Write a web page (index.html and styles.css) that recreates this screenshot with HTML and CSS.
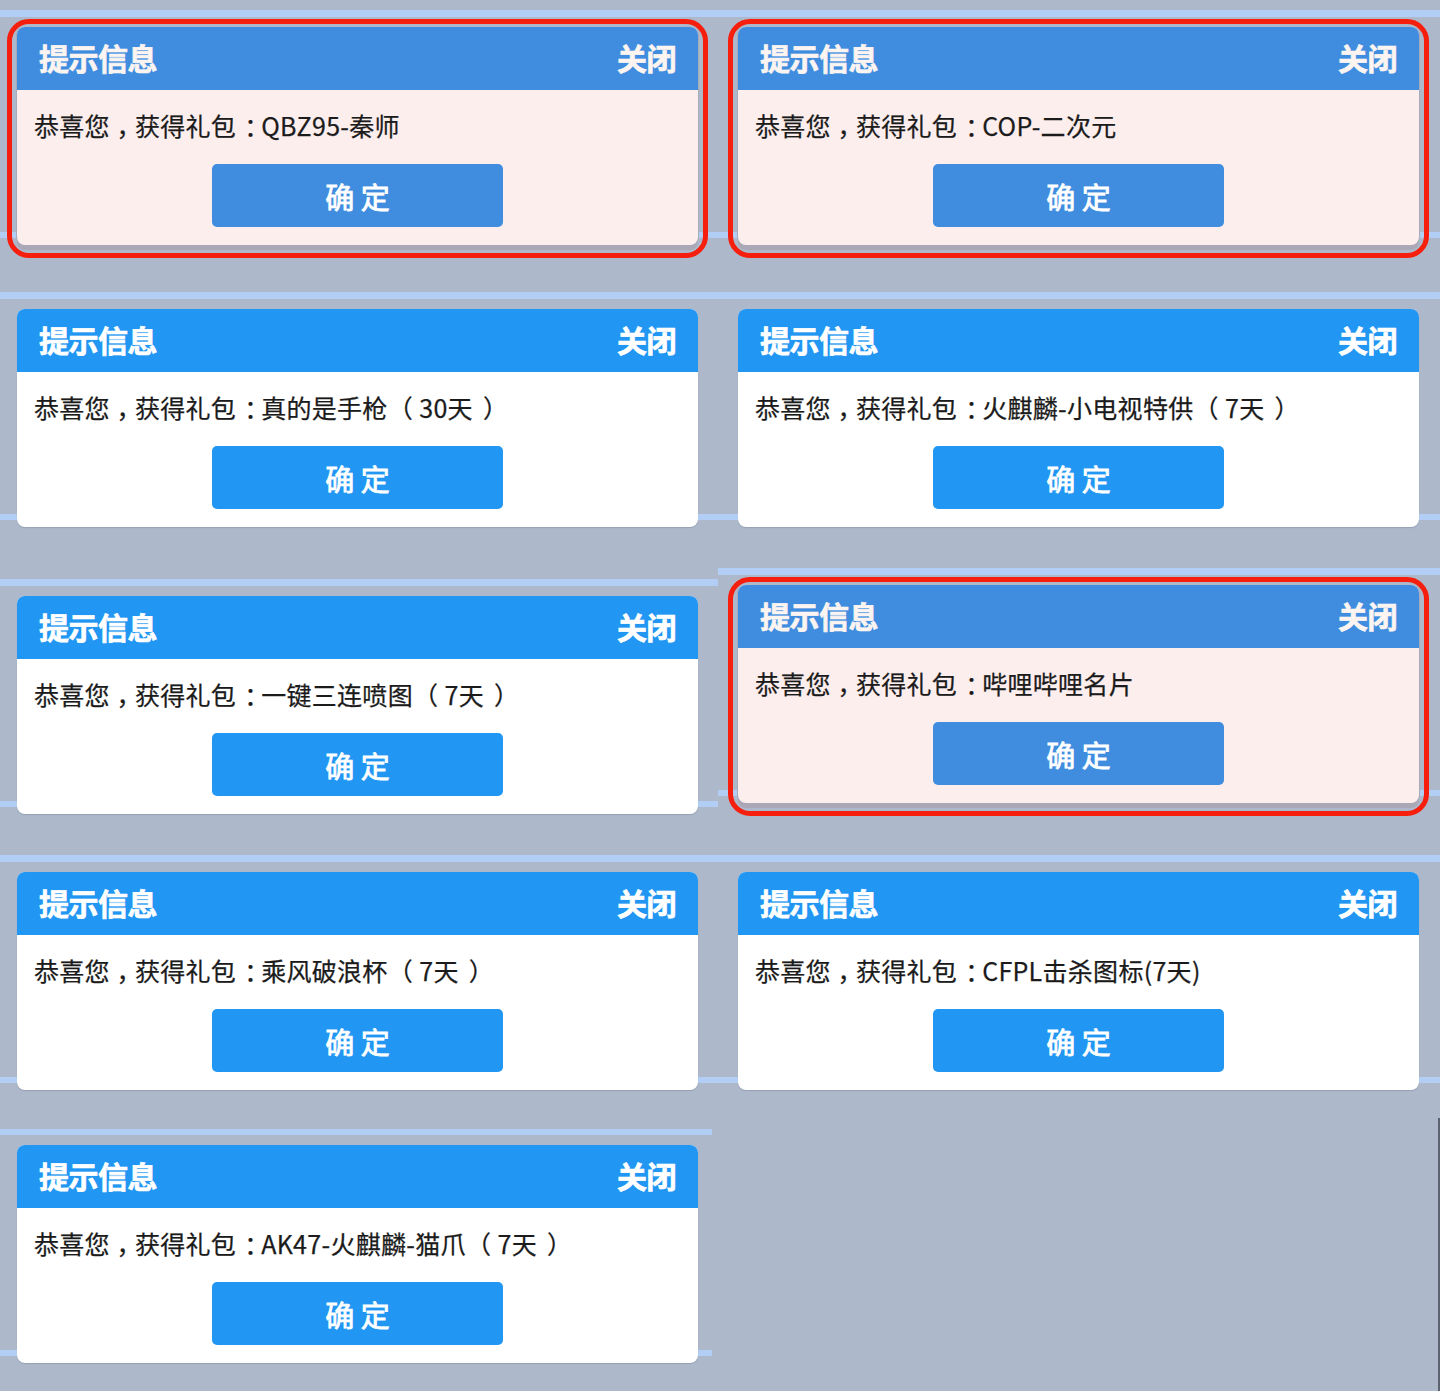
FILE: index.html
```html
<!DOCTYPE html>
<html lang="zh-CN">
<head>
<meta charset="utf-8">
<title>提示信息</title>
<link rel="stylesheet" href="styles.css">
</head>
<body>
<div class="board">
  <div class="col col-left">
    <div class="tile h282">
      <div class="dialog hl">
        <div class="dlg-head"><span class="dlg-title">提示信息</span><span class="dlg-close">关闭</span></div>
        <div class="dlg-body">
          <p class="dlg-msg">恭喜您<span class="pn pn-comma">，</span>获得礼包<span class="pn pn-colon">：</span>QBZ95-秦师</p>
          <button class="dlg-btn">确 定</button>
        </div>
      </div>
    </div>
    <div class="tile h287">
      <div class="dialog">
        <div class="dlg-head"><span class="dlg-title">提示信息</span><span class="dlg-close">关闭</span></div>
        <div class="dlg-body">
          <p class="dlg-msg">恭喜您<span class="pn pn-comma">，</span>获得礼包<span class="pn pn-colon">：</span>真的是手枪<span class="pn pn-open">（</span>30天<span class="pn pn-close">）</span></p>
          <button class="dlg-btn">确 定</button>
        </div>
      </div>
    </div>
    <div class="tile h276">
      <div class="dialog">
        <div class="dlg-head"><span class="dlg-title">提示信息</span><span class="dlg-close">关闭</span></div>
        <div class="dlg-body">
          <p class="dlg-msg">恭喜您<span class="pn pn-comma">，</span>获得礼包<span class="pn pn-colon">：</span>一键三连喷图<span class="pn pn-open">（</span>7天<span class="pn pn-close">）</span></p>
          <button class="dlg-btn">确 定</button>
        </div>
      </div>
    </div>
    <div class="tile h273">
      <div class="dialog">
        <div class="dlg-head"><span class="dlg-title">提示信息</span><span class="dlg-close">关闭</span></div>
        <div class="dlg-body">
          <p class="dlg-msg">恭喜您<span class="pn pn-comma">，</span>获得礼包<span class="pn pn-colon">：</span>乘风破浪杯<span class="pn pn-open">（</span>7天<span class="pn pn-close">）</span></p>
          <button class="dlg-btn">确 定</button>
        </div>
      </div>
    </div>
    <div class="tile h273 short-stripe">
      <div class="dialog">
        <div class="dlg-head"><span class="dlg-title">提示信息</span><span class="dlg-close">关闭</span></div>
        <div class="dlg-body">
          <p class="dlg-msg">恭喜您<span class="pn pn-comma">，</span>获得礼包<span class="pn pn-colon">：</span>AK47-火麒麟-猫爪<span class="pn pn-open">（</span>7天<span class="pn pn-close">）</span></p>
          <button class="dlg-btn">确 定</button>
        </div>
      </div>
    </div>
  </div>
  <div class="col col-right">
    <div class="tile h282">
      <div class="dialog hl">
        <div class="dlg-head"><span class="dlg-title">提示信息</span><span class="dlg-close">关闭</span></div>
        <div class="dlg-body">
          <p class="dlg-msg">恭喜您<span class="pn pn-comma">，</span>获得礼包<span class="pn pn-colon">：</span>COP-二次元</p>
          <button class="dlg-btn">确 定</button>
        </div>
      </div>
    </div>
    <div class="tile h276">
      <div class="dialog">
        <div class="dlg-head"><span class="dlg-title">提示信息</span><span class="dlg-close">关闭</span></div>
        <div class="dlg-body">
          <p class="dlg-msg">恭喜您<span class="pn pn-comma">，</span>获得礼包<span class="pn pn-colon">：</span>火麒麟-小电视特供<span class="pn pn-open">（</span>7天<span class="pn pn-close">）</span></p>
          <button class="dlg-btn">确 定</button>
        </div>
      </div>
    </div>
    <div class="tile h287">
      <div class="dialog hl">
        <div class="dlg-head"><span class="dlg-title">提示信息</span><span class="dlg-close">关闭</span></div>
        <div class="dlg-body">
          <p class="dlg-msg">恭喜您<span class="pn pn-comma">，</span>获得礼包<span class="pn pn-colon">：</span>哔哩哔哩名片</p>
          <button class="dlg-btn">确 定</button>
        </div>
      </div>
    </div>
    <div class="tile h273">
      <div class="dialog">
        <div class="dlg-head"><span class="dlg-title">提示信息</span><span class="dlg-close">关闭</span></div>
        <div class="dlg-body">
          <p class="dlg-msg">恭喜您<span class="pn pn-comma">，</span>获得礼包<span class="pn pn-colon">：</span>CFPL击杀图标(7天)</p>
          <button class="dlg-btn">确 定</button>
        </div>
      </div>
    </div>
    <div class="tile h273 empty"></div>
  </div>
</div>
</body>
</html>
```

FILE: styles.css
```css
html, body {
  margin: 0;
  padding: 0;
  background: #adb9cb;
}

body {
  font-family: "Noto Sans CJK SC", "Noto Sans", sans-serif;
  color: #1b1b1b;
}

.board {
  display: flex;
  width: 1440px;
  height: 1391px;
  overflow: hidden;
}

.col {
  display: flex;
  flex-direction: column;
}

.col-left { width: 718px; }
.col-right { width: 722px; }

.tile {
  box-sizing: border-box;
  padding-top: 27px;
  background:
    linear-gradient(#b2cef4, #b2cef4) 0 10px / 100% 7px no-repeat,
    linear-gradient(#b2cef4, #b2cef4) 0 232px / 100% 6px no-repeat,
    #adb9cb;
}

.col-left .tile { padding-left: 17px; }
.col-right .tile { padding-left: 20px; }

.tile.short-stripe {
  background:
    linear-gradient(#b2cef4, #b2cef4) 0 11px / 712px 6px no-repeat,
    linear-gradient(#b2cef4, #b2cef4) 0 232px / 712px 6px no-repeat,
    #adb9cb;
}

.tile.empty {
  background: #adb9cb;
  box-shadow: inset -2px 0 0 #5c6370;
}

.h282 { height: 282px; }
.h287 { height: 287px; }
.h276 { height: 276px; }
.h273 { height: 273px; }

.dialog {
  position: relative;
  width: 681px;
  height: 218px;
  border-radius: 8px;
  background: #ffffff;
  display: flex;
  flex-direction: column;
  box-shadow: 0 1px 1px rgba(80, 90, 110, 0.25);
}

.dlg-head {
  height: 63px;
  flex: none;
  box-sizing: border-box;
  padding: 0 22px 4px;
  display: flex;
  align-items: center;
  justify-content: space-between;
  background: #2196f3;
  border-radius: 8px 8px 0 0;
  color: #ffffff;
  font-size: 30px;
  font-weight: 700;
  line-height: 1;
  -webkit-text-stroke: 0.7px currentColor;
}

.dlg-title, .dlg-close {
  letter-spacing: -0.5px;
}

.dlg-body {
  flex: 1;
  display: flex;
  flex-direction: column;
  align-items: center;
  padding: 21px 17px 0;
}

.dlg-msg {
  align-self: stretch;
  margin: 0;
  height: 28px;
  font-size: 25px;
  line-height: 28px;
  white-space: nowrap;
  letter-spacing: 0.3px;
  -webkit-text-stroke: 0.25px #1b1b1b;
}

.pn {
  display: inline-block;
}

/* centre the full-width punctuation in its cell, as the reference font does */
.pn-comma { padding-left: 0.26em; letter-spacing: -0.26em; }
.pn-colon { padding-left: 0.32em; letter-spacing: -0.32em; }
.pn-open { margin-right: 0.25em; }
.pn-close { padding-left: 0.4em; letter-spacing: -0.4em; }

.dlg-btn {
  margin-top: 25px;
  width: 291px;
  height: 63px;
  border: 0;
  border-radius: 5px;
  background: #2196f3;
  color: #ffffff;
  font-family: inherit;
  font-size: 29px;
  font-weight: 400;
  line-height: 1;
  padding: 0;
  padding-top: 2px;
  cursor: pointer;
  -webkit-text-stroke: 0.8px #ffffff;
}

/* highlighted (red-circled) dialogs */
.dialog.hl {
  background: #fdeeee;
  box-shadow: -1px 0 0 #a7aab9, 1px 0 0 #a7aab9, 0 5px 0 #aaa8b6;
}

.dialog.hl .dlg-head,
.dialog.hl .dlg-btn {
  background: #408de0;
}

.dialog.hl .dlg-head {
  color: #fbf4f1;
}

.dialog.hl::after {
  content: "";
  position: absolute;
  top: -8px;
  left: -10px;
  right: -10px;
  bottom: -13px;
  border: 5px solid #f61f0e;
  border-radius: 22px;
  pointer-events: none;
}
```
